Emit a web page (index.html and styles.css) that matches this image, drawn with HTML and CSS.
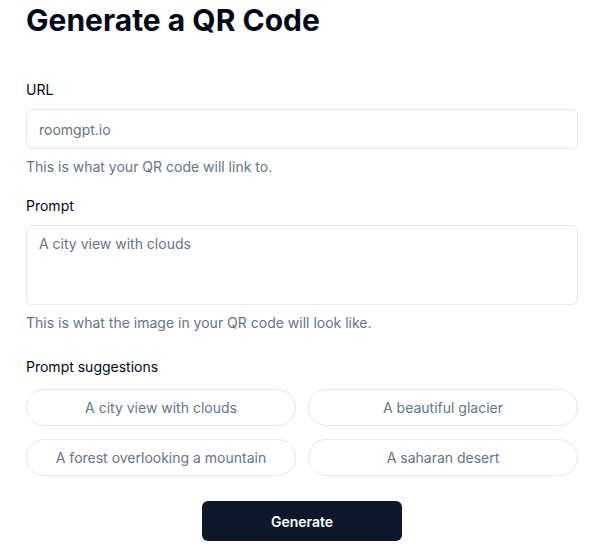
FILE: index.html
```html
<!DOCTYPE html>
<html lang="en">
<head>
<meta charset="utf-8">
<title>Generate a QR Code</title>
<link rel="stylesheet" href="styles.css">
</head>
<body>
<main class="page">
  <h1 class="title">Generate a QR Code</h1>
  <form class="form">
    <div class="field field-url">
      <label class="label" for="url">URL</label>
      <input class="input" id="url" type="text" placeholder="roomgpt.io">
      <p class="desc">This is what your QR code will link to.</p>
    </div>
    <div class="field field-prompt">
      <label class="label" for="prompt">Prompt</label>
      <textarea class="textarea" id="prompt" placeholder="A city view with clouds"></textarea>
      <p class="desc">This is what the image in your QR code will look like.</p>
    </div>
    <div class="field field-suggest">
      <p class="label">Prompt suggestions</p>
      <div class="suggestions">
        <button type="button" class="chip">A city view with clouds</button>
        <button type="button" class="chip">A beautiful glacier</button>
        <button type="button" class="chip">A forest overlooking a mountain</button>
        <button type="button" class="chip">A saharan desert</button>
      </div>
    </div>
    <div class="actions">
      <button type="button" class="primary">Generate</button>
    </div>
  </form>
</main>
</body>
</html>
```

FILE: styles.css
```css
* { box-sizing: border-box; }
html, body { margin: 0; padding: 0; background: #ffffff; }
body {
  font-family: Inter, "Noto Sans", "Liberation Sans", sans-serif;
  color: #020817;
  -webkit-font-smoothing: antialiased;
}
.page {
  padding: 2px 20px 0 26px;
  width: 598px;
}
.title {
  margin: 0;
  font-size: 30px;
  line-height: 36px;
  font-weight: 700;
  color: #020817;
}
.form {
  display: flex;
  flex-direction: column;
  margin-top: 42px;
}
.field {
  display: flex;
  flex-direction: column;
}
.field-prompt { margin-top: 19px; }
.field-suggest { margin-top: 24px; }
.label {
  margin: 0;
  font-size: 14px;
  line-height: 20px;
  font-weight: 400;
  color: #020817;
}
.input {
  margin-top: 9px;
  height: 40px;
  width: 552px;
  border: 1px solid #e2e8f0;
  border-radius: 6px;
  padding: 0 12px;
  font-family: inherit;
  font-size: 14px;
  color: #020817;
  background: #fff;
  outline: none;
}
.textarea {
  margin-top: 9px;
  height: 80px;
  width: 552px;
  border: 1px solid #e2e8f0;
  border-radius: 6px;
  padding: 8px 12px;
  font-family: inherit;
  font-size: 14px;
  line-height: 20px;
  color: #020817;
  background: #fff;
  resize: none;
  outline: none;
}
.input::placeholder, .textarea::placeholder { color: #64748b; opacity: 1; }
.desc {
  margin: 8px 0 0;
  font-size: 14px;
  line-height: 20px;
  color: #64748b;
}
.suggestions {
  margin-top: 12px;
  display: grid;
  grid-template-columns: 270px 270px;
  column-gap: 12px;
  row-gap: 13px;
}
.chip {
  height: 37px;
  border: 1px solid #e2e8f0;
  border-radius: 9999px;
  background: #fff;
  font-family: inherit;
  font-size: 14px;
  color: #64748b;
  padding: 0 16px;
}
.actions {
  display: flex;
  justify-content: center;
  margin-top: 25px;
  width: 552px;
}
.primary {
  width: 200px;
  height: 40px;
  border: none;
  border-radius: 6px;
  background: #0f172a;
  color: #f8fafc;
  font-family: inherit;
  font-size: 14px;
  font-weight: 600;
}
```
